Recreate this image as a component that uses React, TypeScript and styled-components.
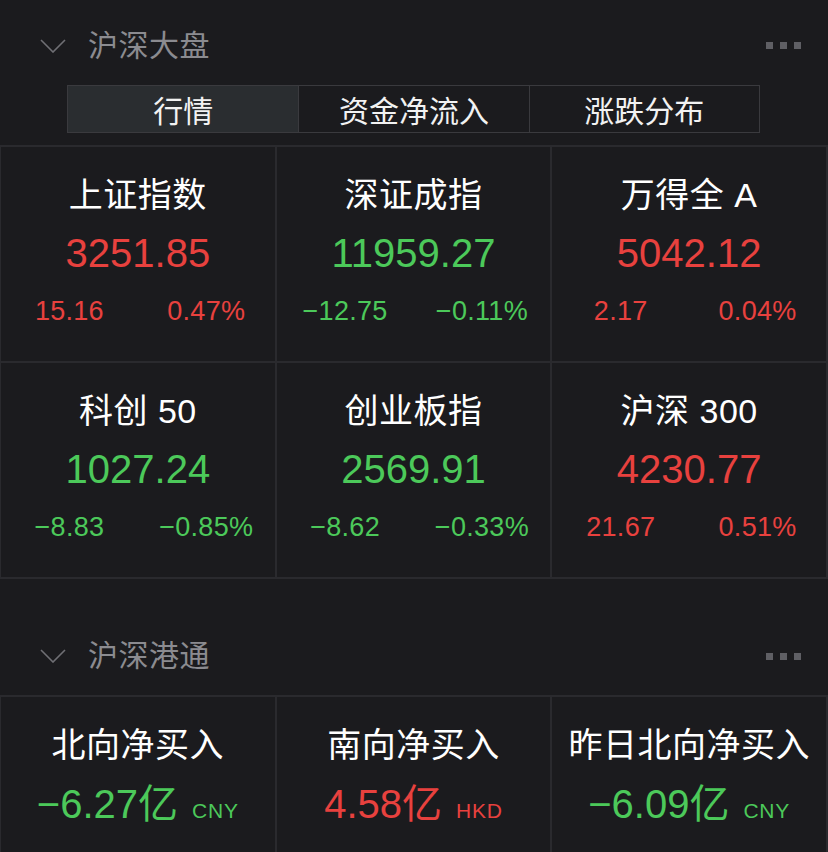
import React from 'react'
import styled, { createGlobalStyle } from 'styled-components'

const RED = '#e8413e'
const GREEN = '#4cc95a'

type Quote = { name: string; price: string; chg: string; pct: string; up: boolean }

const quotes: Quote[] = [
  { name: '上证指数', price: '3251.85', chg: '15.16', pct: '0.47%', up: true },
  { name: '深证成指', price: '11959.27', chg: '−12.75', pct: '−0.11%', up: false },
  { name: '万得全 A', price: '5042.12', chg: '2.17', pct: '0.04%', up: true },
  { name: '科创 50', price: '1027.24', chg: '−8.83', pct: '−0.85%', up: false },
  { name: '创业板指', price: '2569.91', chg: '−8.62', pct: '−0.33%', up: false },
  { name: '沪深 300', price: '4230.77', chg: '21.67', pct: '0.51%', up: true },
]

const flows = [
  { name: '北向净买入', value: '−6.27', unit: 'CNY', up: false },
  { name: '南向净买入', value: '4.58', unit: 'HKD', up: true },
  { name: '昨日北向净买入', value: '−6.09', unit: 'CNY', up: false },
]

const tabs = ['行情', '资金净流入', '涨跌分布']

const Chevron = () => (
  <svg width="26" height="14" viewBox="0 0 26 14">
    <polyline points="1,1 13,13 25,1" fill="none" stroke="#6f6f74" strokeWidth="1.6" />
  </svg>
)

const App = () => {
  return (
    <Page>
      <GlobalStyle />
      <Header>
        <HeadLeft>
          <Chevron />
          <Title>沪深大盘</Title>
        </HeadLeft>
        <Dots><i /><i /><i /></Dots>
      </Header>
      <TabBar>
        {tabs.map((t, i) => (
          <Tab key={t} active={i === 0}>{t}</Tab>
        ))}
      </TabBar>
      <Grid>
        {quotes.map(q => (
          <Cell key={q.name}>
            <Name>{q.name}</Name>
            <Price up={q.up}>{q.price}</Price>
            <ChangeRow>
              <Change up={q.up}>{q.chg}</Change>
              <Change up={q.up}>{q.pct}</Change>
            </ChangeRow>
          </Cell>
        ))}
      </Grid>
      <Header second>
        <HeadLeft>
          <Chevron />
          <Title>沪深港通</Title>
        </HeadLeft>
        <Dots><i /><i /><i /></Dots>
      </Header>
      <Grid>
        {flows.map(f => (
          <Cell key={f.name}>
            <Name>{f.name}</Name>
            <FlowValue up={f.up}>
              {f.value}亿<Unit>{f.unit}</Unit>
            </FlowValue>
          </Cell>
        ))}
      </Grid>
    </Page>
  )
}

export default App

const GlobalStyle = createGlobalStyle`
  body {
    margin: 0;
    background: #1b1b1e;
    font-family: "Liberation Sans", "Noto Sans CJK SC", sans-serif;
  }
`

const Page = styled.div`
  width: 828px;
  height: 852px;
  overflow: hidden;
  background: #1b1b1e;
  color: #ffffff;
`

const Header = styled.div<{ second?: boolean }>`
  box-sizing: border-box;
  height: ${p => (p.second ? '118px' : '85px')};
  padding: ${p => (p.second ? '0 27px 19px 40px' : '6px 27px 0 40px')};
  display: flex;
  align-items: ${p => (p.second ? 'flex-end' : 'center')};
  justify-content: space-between;
  border-bottom: ${p => (p.second ? '2px solid #2a2a2e' : 'none')};
`

const HeadLeft = styled.div`
  display: flex;
  align-items: center;
  gap: 22px;
  height: 40px;
`

const Title = styled.span`
  font-size: 30px;
  line-height: 40px;
  color: #8b8b90;
  letter-spacing: 0.5px;
`

const Dots = styled.div`
  display: flex;
  gap: 7px;
  height: 40px;
  align-items: center;
  i {
    display: block;
    width: 7px;
    height: 7px;
    background: #5f5f64;
  }
`

const TabBar = styled.div`
  margin: 0 68px 0 67px;
  height: 48px;
  display: grid;
  grid-template-columns: repeat(3, 1fr);
  border: 1.5px solid #3a3a3e;
  box-sizing: border-box;
`

const Tab = styled.div<{ active?: boolean }>`
  display: flex;
  align-items: center;
  justify-content: center;
  font-size: 30px;
  color: #f2f2f2;
  background: ${p => (p.active ? '#2a2d30' : 'transparent')};
  & + & {
    border-left: 1.5px solid #3a3a3e;
  }
`

const Grid = styled.div`
  display: grid;
  grid-template-columns: repeat(3, 1fr);
  border-left: 1px solid #2a2a2e;
  ${TabBar} + & {
    margin-top: 12px;
    border-top: 2px solid #2a2a2e;
  }
`

const Cell = styled.div`
  box-sizing: border-box;
  height: 216px;
  display: flex;
  flex-direction: column;
  align-items: center;
  padding-top: 28px;
  border-right: 2px solid #2a2a2e;
  border-bottom: 2px solid #2a2a2e;
`

const Name = styled.div`
  font-size: 34px;
  line-height: 40px;
  color: #ffffff;
  white-space: nowrap;
  letter-spacing: 0.5px;
`

const Price = styled.div<{ up: boolean }>`
  margin-top: 14px;
  font-size: 40px;
  line-height: 48px;
  color: ${p => (p.up ? RED : GREEN)};
`

const ChangeRow = styled.div`
  margin-top: 17px;
  width: 100%;
  display: grid;
  grid-template-columns: 1fr 1fr;
`

const Change = styled.span<{ up: boolean }>`
  text-align: center;
  font-size: 27px;
  line-height: 34px;
  letter-spacing: 0.3px;
  color: ${p => (p.up ? RED : GREEN)};
`

const FlowValue = styled.div<{ up: boolean }>`
  margin-top: 15px;
  font-size: 40px;
  line-height: 48px;
  color: ${p => (p.up ? RED : GREEN)};
  white-space: nowrap;
`

const Unit = styled.span`
  font-size: 21px;
  margin-left: 14px;
  letter-spacing: 0.8px;
`
